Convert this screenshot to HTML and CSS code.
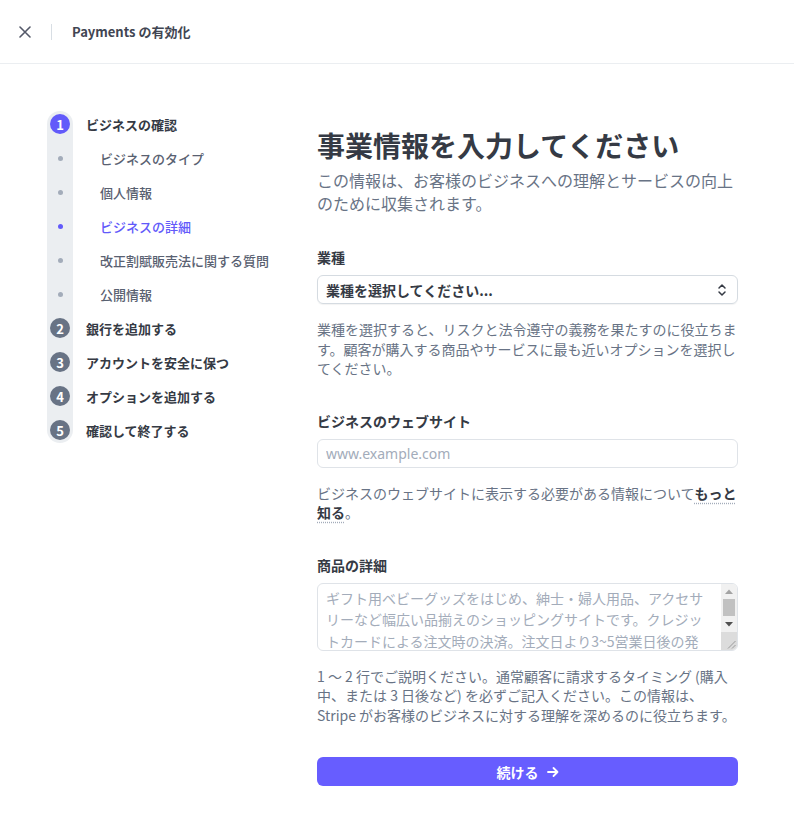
FILE: index.html
```html
<!DOCTYPE html>
<html lang="ja">
<head>
<meta charset="utf-8">
<title>Payments の有効化</title>
<link rel="stylesheet" href="styles.css">
</head>
<body>
<header class="topbar">
  <button class="close" aria-label="閉じる">
    <svg width="12" height="12" viewBox="0 0 12 12"><path d="M1 1L11 11M11 1L1 11" stroke="#545969" stroke-width="1.6" stroke-linecap="round" fill="none"/></svg>
  </button>
  <span class="divider"></span>
  <span class="topbar-title">Payments の有効化</span>
</header>

<div class="layout">
  <nav class="steps">
    <div class="step current"><span class="marker"><span class="num">1</span></span><span class="step-label">ビジネスの確認</span></div>
    <div class="step sub"><span class="marker"><span class="dot"></span></span><span class="sub-label">ビジネスのタイプ</span></div>
    <div class="step sub"><span class="marker"><span class="dot"></span></span><span class="sub-label">個人情報</span></div>
    <div class="step sub active"><span class="marker"><span class="dot"></span></span><span class="sub-label">ビジネスの詳細</span></div>
    <div class="step sub"><span class="marker"><span class="dot"></span></span><span class="sub-label">改正割賦販売法に関する質問</span></div>
    <div class="step sub"><span class="marker"><span class="dot"></span></span><span class="sub-label">公開情報</span></div>
    <div class="step"><span class="marker"><span class="num">2</span></span><span class="step-label">銀行を追加する</span></div>
    <div class="step"><span class="marker"><span class="num">3</span></span><span class="step-label">アカウントを安全に保つ</span></div>
    <div class="step"><span class="marker"><span class="num">4</span></span><span class="step-label">オプションを追加する</span></div>
    <div class="step"><span class="marker"><span class="num">5</span></span><span class="step-label">確認して終了する</span></div>
  </nav>

  <main class="main">
    <h1 class="title">事業情報を入力してください</h1>
    <p class="subtitle">この情報は、お客様のビジネスへの理解とサービスの向上のために収集されます。</p>

    <section class="field">
      <label class="label">業種</label>
      <div class="select">
        <span>業種を選択してください...</span>
        <svg width="10" height="14" viewBox="0 0 10 14"><path d="M2 5L5 2L8 5M2 9L5 12L8 9" stroke="#353a44" stroke-width="1.5" fill="none" stroke-linecap="round" stroke-linejoin="round"/></svg>
      </div>
      <p class="help">業種を選択すると、リスクと法令遵守の義務を果たすのに役立ちます。顧客が購入する商品やサービスに最も近いオプションを選択してください。</p>
    </section>

    <section class="field">
      <label class="label">ビジネスのウェブサイト</label>
      <input class="input" type="text" placeholder="www.example.com">
      <p class="help">ビジネスのウェブサイトに表示する必要がある情報について<a class="more" href="#">もっと知る</a>。</p>
    </section>

    <section class="field">
      <label class="label">商品の詳細</label>
      <div class="textarea-wrap">
        <textarea class="textarea">ギフト用ベビーグッズをはじめ、紳士・婦人用品、アクセサリーなど幅広い品揃えのショッピングサイトです。クレジットカードによる注文時の決済。注文日より3~5営業日後の発送となります。</textarea>
        <div class="scrollbar" aria-hidden="true">
          <div class="sb-btn">
            <svg width="8" height="5" viewBox="0 0 8 5"><path d="M0 5L4 0.5L8 5Z" fill="#a3a3a3"/></svg>
          </div>
          <div class="sb-track"><div class="sb-thumb"></div></div>
          <div class="sb-btn">
            <svg width="8" height="5" viewBox="0 0 8 5"><path d="M0 0L4 4.5L8 0Z" fill="#505050"/></svg>
          </div>
          <div class="sb-corner">
            <svg width="10" height="10" viewBox="0 0 10 10"><path d="M2 9.5L9.5 2M6 9.5L9.5 6" stroke="#9a9a9a" stroke-width="1" fill="none"/></svg>
          </div>
        </div>
      </div>
      <p class="help">1 ～ 2 行でご説明ください。通常顧客に請求するタイミング (購入中、または 3 日後など) を必ずご記入ください。この情報は、Stripe がお客様のビジネスに対する理解を深めるのに役立ちます。</p>
    </section>

    <button class="continue">続ける
      <svg width="12" height="12" viewBox="0 0 12 12"><path d="M1 6H10.5M6.5 2L10.5 6L6.5 10" stroke="#fff" stroke-width="1.8" fill="none" stroke-linecap="round" stroke-linejoin="round"/></svg>
    </button>
  </main>
</div>
</body>
</html>
```

FILE: styles.css
```css
* { box-sizing: border-box; }
html, body { margin: 0; padding: 0; background: #fff; }
body {
  font-family: "Noto Sans CJK JP", "Noto Sans", sans-serif;
  color: #353a44;
  font-size: 14px;
}

.topbar {
  height: 64px;
  border-bottom: 1px solid #ebeef1;
  display: flex;
  align-items: center;
  padding-left: 19px;
}
.close {
  border: 0;
  background: none;
  padding: 0;
  width: 12px;
  height: 12px;
  display: flex;
}
.divider {
  width: 1px;
  height: 16px;
  background: #d8dee4;
  margin-left: 20px;
}
.topbar-title {
  margin-left: 20px;
  font-size: 13px;
  font-weight: 600;
  color: #414552;
}

.layout {
  display: flex;
  padding-top: 43px;
}

.steps {
  position: relative;
  margin-left: 47px;
  width: 270px;
  align-self: flex-start;
}
.steps::before {
  content: "";
  position: absolute;
  left: 0;
  top: 4px;
  bottom: 4px;
  width: 26px;
  border-radius: 13px;
  background: #ebeef1;
}
.step {
  position: relative;
  height: 34px;
  display: flex;
  align-items: center;
}
.marker {
  width: 26px;
  display: flex;
  justify-content: center;
  align-items: center;
}
.num {
  width: 20px;
  height: 20px;
  border-radius: 50%;
  background: #687385;
  color: #fff;
  font-size: 13px;
  font-weight: 700;
  display: flex;
  align-items: center;
  justify-content: center;
  line-height: 1;
}
.current .num { background: #625afa; }
.dot {
  width: 5px;
  height: 5px;
  border-radius: 50%;
  background: #a3acba;
}
.active .dot { background: #625afa; }
.step-label {
  margin-left: 13px;
  font-size: 13px;
  font-weight: 600;
  color: #353a44;
}
.sub-label {
  margin-left: 27px;
  font-size: 13px;
  font-weight: 500;
  color: #596171;
}
.active .sub-label { color: #625afa; }

.main {
  width: 421px;
  margin-top: 20px;
  display: flex;
  flex-direction: column;
}
.title {
  margin: 0;
  font-size: 28px;
  line-height: 36px;
  font-weight: 700;
  color: #353a44;
}
.subtitle {
  margin: 6px 0 0;
  font-size: 16px;
  line-height: 23px;
  color: #687385;
}
.field {
  margin-top: 32px;
  display: flex;
  flex-direction: column;
}
.label {
  font-size: 14px;
  line-height: 20px;
  font-weight: 700;
  color: #353a44;
  margin-bottom: 8px;
}
.select {
  height: 29px;
  border: 1px solid #d5dbe1;
  border-radius: 6px;
  box-shadow: 0 1px 1px rgba(0,0,0,0.05);
  display: flex;
  align-items: center;
  justify-content: space-between;
  padding: 0 10px 0 8px;
  font-size: 14px;
  font-weight: 600;
  color: #353a44;
}
.input {
  height: 29px;
  border: 1px solid #dfe3e8;
  border-radius: 6px;
  padding: 0 8px;
  font: inherit;
  font-size: 14px;
  font-family: "Noto Sans", "Noto Sans CJK JP", sans-serif;
  color: #353a44;
  outline: none;
}
.input::placeholder { color: #a3acba; }

.textarea-wrap {
  position: relative;
  height: 68px;
}
.textarea {
  display: block;
  width: 100%;
  height: 68px;
  border: 1px solid #dfe3e8;
  border-radius: 6px;
  padding: 4px 25px 4px 8px;
  font-family: "Noto Sans CJK JP", sans-serif;
  font-size: 14px;
  line-height: 21.5px;
  color: #a3acba;
  overflow: hidden;
  resize: none;
  outline: none;
}
.scrollbar {
  position: absolute;
  top: 1px;
  right: 1px;
  bottom: 1px;
  width: 16px;
  display: flex;
  flex-direction: column;
  background: #f1f1f1;
  border-radius: 0 5px 5px 0;
  overflow: hidden;
}
.sb-btn {
  height: 15px;
  display: flex;
  align-items: center;
  justify-content: center;
}
.sb-track {
  height: 18px;
  padding: 0 2px;
}
.sb-thumb {
  height: 17px;
  background: #c1c1c1;
}
.sb-corner {
  flex: 1;
  background: #dcdcdc;
  display: flex;
  align-items: flex-end;
  justify-content: flex-end;
  padding: 0 1px 1px 0;
}

.help {
  margin: 16px 0 0;
  font-size: 14px;
  line-height: 19.5px;
  color: #687385;
}
.more {
  color: #353a44;
  font-weight: 700;
  text-decoration: underline dotted #a3acba;
  text-underline-offset: 4px;
}
.continue {
  margin-top: 32px;
  height: 29px;
  border: 0;
  border-radius: 6px;
  background: #675dff;
  color: #fff;
  font-family: "Noto Sans CJK JP", sans-serif;
  font-size: 14px;
  font-weight: 700;
  display: flex;
  align-items: center;
  justify-content: center;
  gap: 8px;
}
```
